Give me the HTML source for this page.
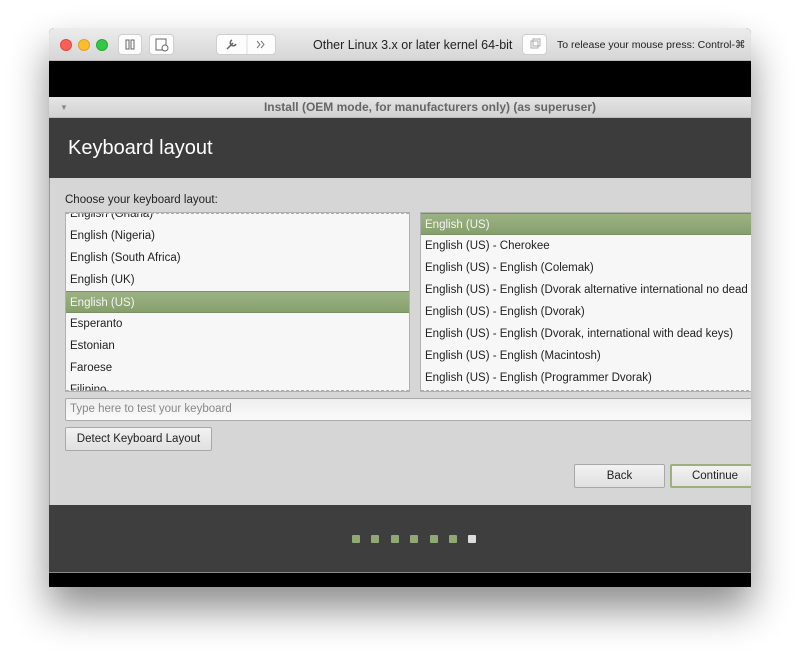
<!DOCTYPE html>
<html><head><meta charset="utf-8"><style>
*{box-sizing:border-box;margin:0;padding:0}
body{width:800px;height:657px;background:#fff;position:relative;overflow:hidden;font-family:"Liberation Sans",sans-serif;}
.win{position:absolute;left:49px;top:28px;width:702px;height:559px;background:#000;border-radius:5px 5px 0 0;box-shadow:0 22px 40px rgba(0,0,0,0.45);overflow:hidden}
.tb{position:absolute;left:0;top:0;width:702px;height:33px;background:linear-gradient(#ececec,#d6d6d6);border-bottom:1px solid #b8b8b8}
.dot{position:absolute;top:11px;width:12px;height:12px;border-radius:50%}
.btn{position:absolute;top:6px;height:21px;background:#fdfdfd;border:1px solid #cfcfcf;border-radius:4px}
.tt{position:absolute;top:10px;font-family:"Liberation Sans",sans-serif;color:#222}
.ititle{position:absolute;left:0;top:69px;width:702px;height:21px;background:linear-gradient(#e4e4e4,#d2d2d2);border-bottom:1px solid #bbb;font-size:12px;font-weight:bold;color:#666;text-align:center;line-height:21px;padding-left:60px}
.hdr{position:absolute;left:0;top:90px;width:702px;height:60px;background:#3c3c3c;color:#fff;font-size:20px;padding:19px 0 0 19px}
.cont{position:absolute;left:0;top:150px;width:702px;height:327px;background:#d6d6d6;border-left:1px solid #999}
.lbl{position:absolute;left:15px;top:16px;font-size:11.5px;color:#222}
.list{position:absolute;top:34px;height:180px;background:#f7f7f7;border:1px solid #b0b0b0;overflow:hidden;font-size:11.5px;color:#222}
.list div{height:22px;line-height:22px;padding-left:4px;white-space:nowrap}
.list .sel{background:linear-gradient(#9cb283,#879f6d);color:#f4f4f4;border-top:1px solid #7a8f64;border-bottom:1px solid #7a8f64}
.dash{position:absolute;left:0;right:0;height:0;border-top:1px dashed #aaa}
.inp{position:absolute;left:15px;top:220px;width:700px;height:23px;background:linear-gradient(#eee,#fafafa);border:1px solid #aaa;border-radius:2px;font-size:11.5px;color:#888;line-height:21px;padding-left:4px}
.b{position:absolute;height:24px;background:linear-gradient(#f2f2f2,#e0e0e0);border:1px solid #a8a8a8;border-radius:2px;font-size:11.5px;color:#222;text-align:center;line-height:22px}
.ftr{position:absolute;left:0;top:477px;width:702px;height:68px;background:#3e3e3e;border-bottom:1px solid #888}
.pd{position:absolute;top:30px;width:8px;height:8px;border-radius:1px;background:#8fa874}
</style></head><body>
<div class="win">
 <div class="tb">
  <div class="dot" style="left:11px;background:#fc5f57;border:1px solid #de4a42"></div>
  <div class="dot" style="left:29px;background:#fdbc2e;border:1px solid #dea123"></div>
  <div class="dot" style="left:47px;background:#33c748;border:1px solid #27aa35"></div>
  <div class="btn" style="left:69px;width:24px"><svg width="22" height="19"><rect x="7" y="5" width="3" height="9" fill="none" stroke="#666"/><rect x="12" y="5" width="3" height="9" fill="none" stroke="#666"/></svg></div>
  <div class="btn" style="left:100px;width:25px"><svg width="23" height="19"><rect x="6" y="4" width="10" height="11" fill="none" stroke="#666"/><circle cx="15" cy="13" r="3" fill="#fff" stroke="#666"/></svg></div>
  <div class="btn" style="left:167px;width:60px"><svg width="58" height="19"><path d="M10 14 L16 8 M15 5 a3 3 0 1 0 4 4" fill="none" stroke="#666" stroke-width="1.5"/><line x1="30" y1="0" x2="30" y2="19" stroke="#ddd"/><path d="M40 6 l3 3.5 -3 3.5 M44 6 l3 3.5 -3 3.5" fill="none" stroke="#777"/></svg></div>
  <div class="tt" style="left:264px;font-size:12.5px">Other Linux 3.x or later kernel 64-bit</div>
  <div class="btn" style="left:473px;width:25px"><svg width="23" height="19"><rect x="8" y="6" width="7" height="7" fill="none" stroke="#aaa"/><rect x="10" y="4" width="7" height="7" fill="none" stroke="#aaa"/></svg></div>
  <div class="tt" style="left:508px;top:11px;font-size:10.5px">To release your mouse press: Control-⌘</div>
 </div>
 <div class="ititle"><span style="position:absolute;left:11px;top:0;font-size:8px;color:#888">▼</span>Install (OEM mode, for manufacturers only) (as superuser)</div>
 <div class="hdr">Keyboard layout</div>
 <div class="cont">
  <div class="lbl">Choose your keyboard layout:</div>
  <div class="list" style="left:15px;width:345px">
   <div style="margin-top:-10px">English (Ghana)</div><div>English (Nigeria)</div><div>English (South Africa)</div><div>English (UK)</div><div class="sel">English (US)</div><div>Esperanto</div><div>Estonian</div><div>Faroese</div><div>Filipino</div>
   <div class="dash" style="top:0"></div><div class="dash" style="top:177px"></div>
  </div>
  <div class="list" style="left:370px;width:340px">
   <div class="sel">English (US)</div><div>English (US) - Cherokee</div><div>English (US) - English (Colemak)</div><div>English (US) - English (Dvorak alternative international no dead keys)</div><div>English (US) - English (Dvorak)</div><div>English (US) - English (Dvorak, international with dead keys)</div><div>English (US) - English (Macintosh)</div><div>English (US) - English (Programmer Dvorak)</div>
   <div class="dash" style="top:177px"></div>
  </div>
  <div class="inp">Type here to test your keyboard</div>
  <div class="b" style="left:15px;top:249px;width:147px">Detect Keyboard Layout</div>
  <div class="b" style="left:524px;top:286px;width:91px">Back</div>
  <div class="b" style="left:620px;top:286px;width:90px;border:2px solid #9cb07f;line-height:20px">Continue</div>
 </div>
 <div class="ftr">
  <div class="pd" style="left:303px"></div><div class="pd" style="left:322px"></div><div class="pd" style="left:342px"></div><div class="pd" style="left:361px"></div><div class="pd" style="left:381px"></div><div class="pd" style="left:400px"></div><div class="pd" style="left:419px;background:#ddd"></div>
 </div>
</div>
</body></html>
